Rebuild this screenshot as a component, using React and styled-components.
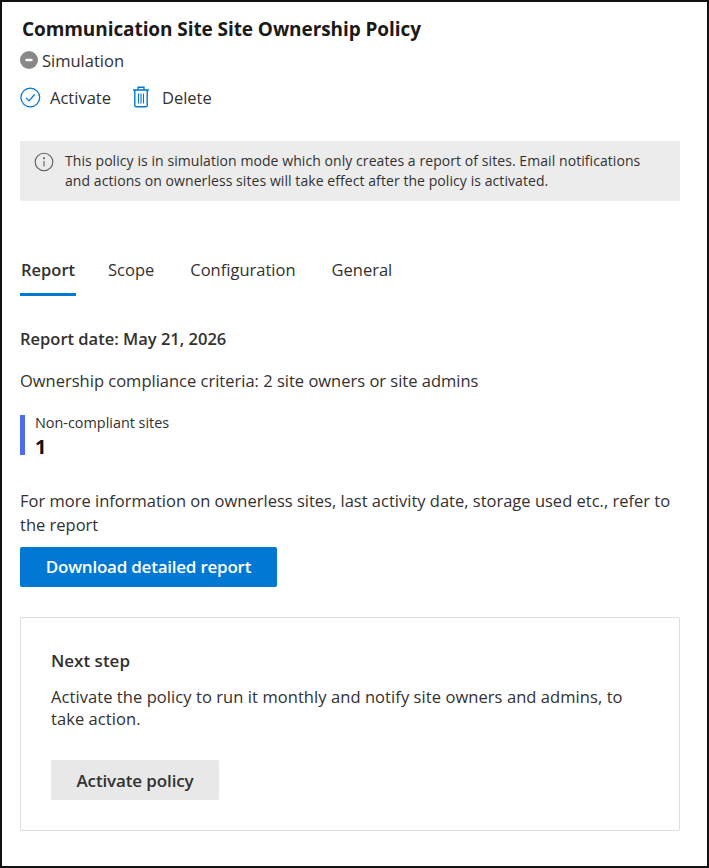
import React from "react";
import styled, { createGlobalStyle } from "styled-components";

const GlobalStyle = createGlobalStyle`
  html, body {
    margin: 0;
    padding: 0;
    background: #fff;
  }
  body {
    font-family: "Open Sans", "Noto Sans", "Liberation Sans", sans-serif;
    color: #323130;
  }
`;

const Frame = styled.div`
  box-sizing: border-box;
  width: 709px;
  height: 868px;
  border: 2px solid #111;
  padding: 15px 27px 0 18px;
  overflow: hidden;
`;

const Title = styled.h1`
  margin: 0 0 0 2px;
  font-size: 19px;
  line-height: 24px;
  font-weight: 700;
  letter-spacing: -0.08px;
  color: #1b1a19;
`;

const Status = styled.div`
  display: flex;
  align-items: center;
  gap: 4px;
  margin-top: 8px;
  height: 22px;
  font-size: 16.5px;
`;

const Actions = styled.div`
  display: flex;
  align-items: center;
  gap: 22px;
  margin-top: 14px;
  height: 24px;
`;

const Action = styled.button`
  display: flex;
  align-items: center;
  gap: ${(p) => p.$gap}px;
  padding: 0;
  border: 0;
  background: none;
  font: inherit;
  font-size: 16.5px;
  color: #323130;
`;

const Notice = styled.div`
  display: flex;
  gap: 11px;
  margin-top: 32px;
  padding: 10px 14px;
  height: 60px;
  box-sizing: border-box;
  background: #ececec;
  font-size: 14px;
  line-height: 20px;
  letter-spacing: 0.07px;
`;

const NoticeIcon = styled.svg`
  flex: none;
  margin-top: 1px;
`;

const Tabs = styled.div`
  display: flex;
  gap: 34px;
  margin-top: 53px;
`;

const Tab = styled.div`
  box-sizing: border-box;
  height: 42px;
  padding: 4px 1px 0;
  font-size: 16.5px;
  line-height: 24px;
  font-weight: ${(p) => (p.$active ? 600 : 400)};
  border-bottom: 3px solid ${(p) => (p.$active ? "#0078d4" : "transparent")};
  margin-right: ${(p) => (p.$active ? -3 : 0)}px;
`;

const ReportDate = styled.div`
  margin-top: 31px;
  font-size: 16.5px;
  line-height: 24px;
  font-weight: 600;
`;

const Criteria = styled.div`
  margin-top: 18px;
  font-size: 16.5px;
  line-height: 24px;
`;

const Metric = styled.div`
  margin-top: 22px;
  height: 40px;
  padding-left: 10px;
  border-left: 5px solid #4f6bed;
`;

const MetricLabel = styled.div`
  font-size: 14.4px;
  line-height: 16px;
`;

const MetricValue = styled.div`
  margin-top: 5px;
  font-size: 20px;
  line-height: 22px;
  font-weight: 700;
  color: #111;
`;

const Info = styled.p`
  margin: 34px 0 0;
  font-size: 16.5px;
  line-height: 24px;
`;

const PrimaryButton = styled.button`
  display: block;
  width: 257px;
  height: 40px;
  margin-top: 10px;
  padding: 0 0 1px;
  border: 0;
  border-radius: 2px;
  background: #0078d4;
  color: #fff;
  font: inherit;
  font-size: 17px;
  font-weight: 600;
  letter-spacing: -0.23px;
`;

const Card = styled.section`
  box-sizing: border-box;
  height: 214px;
  margin-top: 30px;
  padding: 31px 30px 0;
  border: 1px solid #dedede;
  border-radius: 2px;
`;

const CardTitle = styled.h2`
  margin: 0;
  font-size: 17px;
  line-height: 24px;
  font-weight: 600;
`;

const CardText = styled.p`
  margin: 13px 0 0;
  font-size: 16.5px;
  line-height: 22px;
  letter-spacing: 0.07px;
`;

const SecondaryButton = styled.button`
  display: block;
  width: 168px;
  height: 40px;
  margin-top: 30px;
  padding: 0;
  border: 0;
  border-radius: 2px;
  background: #e8e8e8;
  color: #323130;
  font: inherit;
  font-size: 17px;
  font-weight: 600;
  letter-spacing: -0.13px;
`;

const StatusIcon = () => (
  <svg width="18" height="18" viewBox="0 0 18 18">
    <circle cx="9" cy="9" r="9" fill="#8a8886" />
    <rect x="5.5" y="7.8" width="7" height="2.4" fill="#fff" />
  </svg>
);

const CheckIcon = () => (
  <svg width="21" height="21" viewBox="0 0 21 21" fill="none" stroke="#0078d4" strokeWidth="1.3">
    <circle cx="10.3" cy="10.5" r="9.4" />
    <path d="M6 10.9l3 3 5.6-6.4" />
  </svg>
);

const TrashIcon = () => (
  <svg width="16" height="22" viewBox="0 0 16 22" fill="none" stroke="#0078d4" strokeWidth="1.4">
    <path d="M0 4h16M5 4V1.2h6V4M1.8 4v15.4c0 .9.6 1.4 1.4 1.4h9.6c.8 0 1.4-.5 1.4-1.4V4" />
    <path d="M5.5 7.5v10M8 7.5v10M10.5 7.5v10" strokeWidth="1.1" />
  </svg>
);

const InfoIcon = () => (
  <NoticeIcon width="20" height="20" viewBox="0 0 20 20" fill="none" stroke="#605e5c" strokeWidth="1.1">
    <circle cx="10" cy="10" r="8.8" />
    <path d="M10 9v5.4" />
    <circle cx="10" cy="6.2" r="0.5" fill="#605e5c" />
  </NoticeIcon>
);

const tabs = ["Report", "Scope", "Configuration", "General"];

export default function App() {
  return (
    <Frame>
      <GlobalStyle />
      <Title>Communication Site Site Ownership Policy</Title>
      <Status>
        <StatusIcon />
        Simulation
      </Status>
      <Actions>
        <Action $gap={9}>
          <CheckIcon />
          Activate
        </Action>
        <Action $gap={13}>
          <TrashIcon />
          Delete
        </Action>
      </Actions>
      <Notice>
        <InfoIcon />
        <span>
          This policy is in simulation mode which only creates a report of sites. Email notifications
          <br />
          and actions on ownerless sites will take effect after the policy is activated.
        </span>
      </Notice>
      <Tabs>
        {tabs.map((t, i) => (
          <Tab key={t} $active={i === 0}>
            {t}
          </Tab>
        ))}
      </Tabs>
      <ReportDate>Report date: May 21, 2026</ReportDate>
      <Criteria>Ownership compliance criteria: 2 site owners or site admins</Criteria>
      <Metric>
        <MetricLabel>Non-compliant sites</MetricLabel>
        <MetricValue>1</MetricValue>
      </Metric>
      <Info>
        For more information on ownerless sites, last activity date, storage used etc., refer to
        <br />
        the report
      </Info>
      <PrimaryButton>Download detailed report</PrimaryButton>
      <Card>
        <CardTitle>Next step</CardTitle>
        <CardText>
          Activate the policy to run it monthly and notify site owners and admins, to
          <br />
          take action.
        </CardText>
        <SecondaryButton>Activate policy</SecondaryButton>
      </Card>
    </Frame>
  );
}
